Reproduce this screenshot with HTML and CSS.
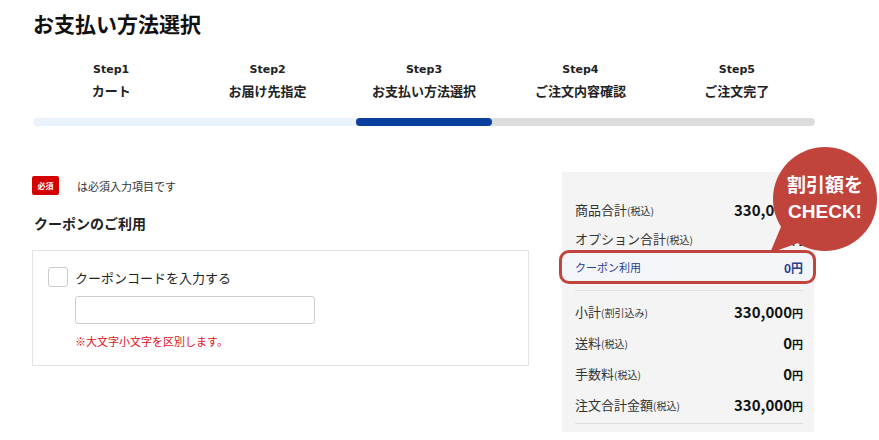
FILE: index.html
```html
<!DOCTYPE html>
<html lang="ja">
<head>
    <meta charset="UTF-8">
    <meta name="viewport" content="width=device-width, initial-scale=1.0">
    <title>お支払い方法選択</title>
    <link rel="stylesheet" href="styles.css">
</head>
<body>

    <div class="page">
        <h1 class="page-title">お支払い方法選択</h1>

        <div class="steps">
            <div class="step">
                <div class="step-num">Step1</div>
                <div class="step-name">カート</div>
            </div>
            <div class="step">
                <div class="step-num">Step2</div>
                <div class="step-name">お届け先指定</div>
            </div>
            <div class="step">
                <div class="step-num">Step3</div>
                <div class="step-name">お支払い方法選択</div>
            </div>
            <div class="step">
                <div class="step-num">Step4</div>
                <div class="step-name">ご注文内容確認</div>
            </div>
            <div class="step">
                <div class="step-num">Step5</div>
                <div class="step-name">ご注文完了</div>
            </div>
        </div>
        <div class="progress">
            <span class="progress-done"></span>
            <span class="progress-current"></span>
            <span class="progress-rest"></span>
        </div>

        <div class="main">
            <div class="form-col">
                <div class="required-note">
                    <span class="badge">必須</span>
                    <span>は必須入力項目です</span>
                </div>

                <h2 class="section-title">クーポンのご利用</h2>

                <div class="coupon-box">
                    <label class="check-row">
                        <span class="checkbox"></span>
                        <span>クーポンコードを入力する</span>
                    </label>
                    <input type="text" class="coupon-input">
                    <p class="coupon-note">※大文字小文字を区別します。</p>
                </div>
            </div>

            <div class="summary">
                <div class="sum-row row-first">
                    <span class="sum-label">商品合計<small>(税込)</small></span>
                    <span class="sum-value">330,000<small>円</small></span>
                </div>
                <div class="sum-row row-second">
                    <span class="sum-label">オプション合計<small>(税込)</small></span>
                    <span class="sum-value">0<small>円</small></span>
                </div>
                <div class="sum-row coupon-row">
                    <span class="coupon-label">クーポン利用</span>
                    <span class="coupon-value">0円</span>
                </div>
                <div class="sum-line"></div>
                <div class="sum-row">
                    <span class="sum-label">小計<small>(割引込み)</small></span>
                    <span class="sum-value">330,000<small>円</small></span>
                </div>
                <div class="sum-row">
                    <span class="sum-label">送料<small>(税込)</small></span>
                    <span class="sum-value">0<small>円</small></span>
                </div>
                <div class="sum-row">
                    <span class="sum-label">手数料<small>(税込)</small></span>
                    <span class="sum-value">0<small>円</small></span>
                </div>
                <div class="sum-row">
                    <span class="sum-label">注文合計金額<small>(税込)</small></span>
                    <span class="sum-value">330,000<small>円</small></span>
                </div>
                <div class="sum-line line-bottom"></div>
            </div>
        </div>
    </div>

    <div class="bubble">
        <svg width="119" height="120" viewBox="0 0 119 120">
            <circle cx="65" cy="59" r="52" fill="#c0443c"/>
            <polygon points="23,82 41,102 10,113" fill="#c0443c"/>
        </svg>
        <div class="bubble-text">割引額を<br>CHECK!</div>
    </div>

</body>
</html>
```

FILE: styles.css
```css
body {
    margin: 0;
    font-family: "Noto Sans CJK JP", "Noto Sans", sans-serif;
    color: #222;
    background-color: #fff;
}

.page {
    margin-left: 33px;
    width: 782px;
}

.page-title {
    margin: 8px 0 0;
    font-size: 21px;
    line-height: 30px;
    font-weight: bold;
    color: #111;
}

.steps {
    display: flex;
    margin-top: 24px;
}

.step {
    flex: 1;
    text-align: center;
}

.step-num {
    font-family: "DejaVu Sans", sans-serif;
    font-size: 11px;
    font-weight: bold;
    line-height: 16px;
}

.step-name {
    margin-top: 3px;
    font-size: 13px;
    font-weight: bold;
    line-height: 20px;
}

.progress {
    display: flex;
    height: 8px;
    margin-top: 17px;
    margin-left: 1px;
    border-radius: 4px;
    background-color: #dcdcdc;
}

.progress-done {
    width: 322px;
    background-color: #eaf2fb;
    border-radius: 4px 0 0 4px;
}

.progress-current {
    width: 136px;
    background-color: #0a3fa0;
    border-radius: 4px;
}

.main {
    display: flex;
    justify-content: space-between;
    margin-top: 46px;
}

.form-col {
    width: 497px;
    margin-left: -1px;
    padding-top: 4px;
}

.required-note {
    display: flex;
    align-items: center;
    gap: 18px;
    font-size: 11px;
    color: #333;
}

.badge {
    display: inline-block;
    width: 27px;
    height: 19px;
    line-height: 19px;
    text-align: center;
    background-color: #d40000;
    color: #fff;
    font-size: 8px;
    font-weight: bold;
    border-radius: 2px;
}

.section-title {
    margin: 17px 0 0 2px;
    font-size: 14px;
    line-height: 22px;
    font-weight: bold;
}

.coupon-box {
    margin-top: 16px;
    padding: 16px 15px 16px;
    border: 1px solid #e3e3e3;
}

.check-row {
    display: flex;
    align-items: center;
    gap: 7px;
    font-size: 13px;
}

.checkbox {
    width: 18px;
    height: 18px;
    border: 1px solid #ccc;
    border-radius: 3px;
    background-color: #fff;
}

.coupon-input {
    display: block;
    width: 240px;
    height: 28px;
    margin: 9px 0 0 27px;
    border: 1px solid #ccc;
    border-radius: 3px;
    box-sizing: border-box;
    outline: none;
}

.coupon-note {
    margin: 9px 0 0 27px;
    font-size: 11px;
    line-height: 16px;
    color: #e0101a;
}

.summary {
    width: 252px;
    height: 260px;
    margin-right: 1px;
    padding: 27px 11px 0 13px;
    box-sizing: border-box;
    background-color: #f4f4f4;
}

.sum-row {
    display: flex;
    justify-content: space-between;
    align-items: center;
    height: 24px;
    margin-top: 7px;
}

.row-first {
    margin-top: -2px;
}

.row-second {
    margin-top: 5px;
}

.sum-label {
    font-size: 13px;
    color: #333;
}

.sum-label small {
    font-size: 10px;
}

.sum-value {
    font-size: 15px;
    font-weight: bold;
    color: #111;
}

.sum-value small {
    font-size: 11px;
}

.coupon-row {
    height: 34px;
    margin: 0 -13px 0 -16px;
    padding: 0 10px 0 13px;
    border: 3px solid #c1443d;
    border-radius: 10px;
    box-sizing: border-box;
    background-color: #f4f5f8;
}

.coupon-label {
    font-size: 11px;
    color: #2b3f8f;
}

.coupon-value {
    font-size: 12px;
    font-weight: bold;
    color: #2b3f8f;
}

.sum-line {
    height: 1px;
    margin-top: 6px;
    background-color: #dedede;
}

.sum-line + .sum-row {
    margin-top: 8px;
}

.line-bottom {
    margin-top: 7px;
}

.bubble {
    position: absolute;
    left: 760px;
    top: 140px;
    width: 119px;
    height: 120px;
}

.bubble svg {
    display: block;
}

.bubble-text {
    position: absolute;
    left: 15px;
    top: 33px;
    width: 100px;
    text-align: center;
    color: #fff;
    font-family: "Liberation Sans", "Noto Sans CJK JP", sans-serif;
    font-size: 19px;
    font-weight: bold;
    line-height: 26px;
}
```
